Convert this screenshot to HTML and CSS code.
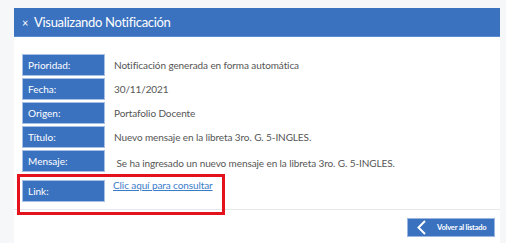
FILE: index.html
```html
<!DOCTYPE html>
<html lang="es">
<head>
<meta charset="utf-8">
<link rel="stylesheet" href="styles.css">
</head>
<body>
<div class="panel">
  <div class="header"><span class="close">×</span><span class="title">Visualizando Notificación</span></div>
  <div class="content">
    <div class="rows">
      <div class="row"><div class="label">Prioridad:</div><div class="value">Notificación generada en forma automática</div></div>
      <div class="row"><div class="label">Fecha:</div><div class="value">30/11/2021</div></div>
      <div class="row"><div class="label">Origen:</div><div class="value">Portafolio Docente</div></div>
      <div class="row"><div class="label">Título:</div><div class="value">Nuevo mensaje en la libreta 3ro. G. 5-INGLES.</div></div>
      <div class="row"><div class="label">Mensaje:</div><div class="value msg">&nbsp;Se ha ingresado un nuevo mensaje en la libreta 3ro. G. 5-INGLES.</div></div>
      <div class="row link-row"><div class="label">Link:</div><div class="value top"><a href="#" class="link">Clic aquí para consultar</a></div></div>
    </div>
    <div class="mark"></div>
  </div>
  <div class="footer">
    <a href="#" class="btn"><svg class="chev" width="11" height="15" viewBox="0 0 11 15"><path d="M9 1 L2.5 7.5 L9 14" fill="none" stroke="#fff" stroke-width="2"/></svg><span>Volver al listado</span></a>
  </div>
</div>
</body>
</html>
```
FILE: styles.css
```css
html, body { margin: 0; padding: 0; }
body {
  background: #f6f7f9;
  font-family: "Lato", "Open Sans", sans-serif;
  width: 506px;
  height: 243px;
  overflow: hidden;
}
.panel {
  margin: 8px 6px 0 14px;
  background: #fff;
  height: 235px;
}
.header {
  height: 28px;
  background: #3b72c0;
  border-bottom: 1px solid #5b8bd0;
  display: flex;
  align-items: center;
  color: #fff;
}
.close { font-size: 11px; margin-left: 8px; width: 12px; }
.title { font-size: 13px; letter-spacing: -0.3px; }
.content {
  position: relative;
  padding: 17px 0 0 8px;
  height: 155px;
  border-bottom: 1px solid #e6e8eb;
}
.rows { display: flex; flex-direction: column; gap: 2px; }
.row { display: flex; align-items: center; height: 22px; }
.label {
  box-sizing: border-box;
  width: 83px;
  height: 22px;
  background: #3b72c0;
  border: 1px solid #a8c0e4;
  color: #fff;
  font-size: 10px;
  display: flex;
  align-items: center;
  padding-left: 5px;
}
.value {
  margin-left: 9px;
  font-size: 10px;
  letter-spacing: -0.1px;
  color: #555;
}
.msg { padding-top: 3px; }
.link-row { margin-top: 6px; align-items: flex-start; }
.top { margin-left: 8px; margin-top: -1px; }
.link { color: #3b7cc9; text-decoration: underline; font-size: 10px; }
.mark {
  position: absolute;
  left: 3px;
  top: 137px;
  width: 202px;
  height: 35px;
  border: 3px solid #e3121d;
}
.footer {
  display: flex;
  justify-content: flex-end;
  padding: 8px 5px 0 0;
}
.btn {
  box-sizing: border-box;
  width: 88px;
  height: 19px;
  background: #3b72c0;
  border: 1px solid #9ab6e0;
  display: flex;
  align-items: center;
  text-decoration: none;
  color: #fff;
}
.chev { margin-left: 8px; margin-right: 10px; }
.btn span { font-size: 7.5px; font-weight: bold; letter-spacing: -0.2px; }
```
